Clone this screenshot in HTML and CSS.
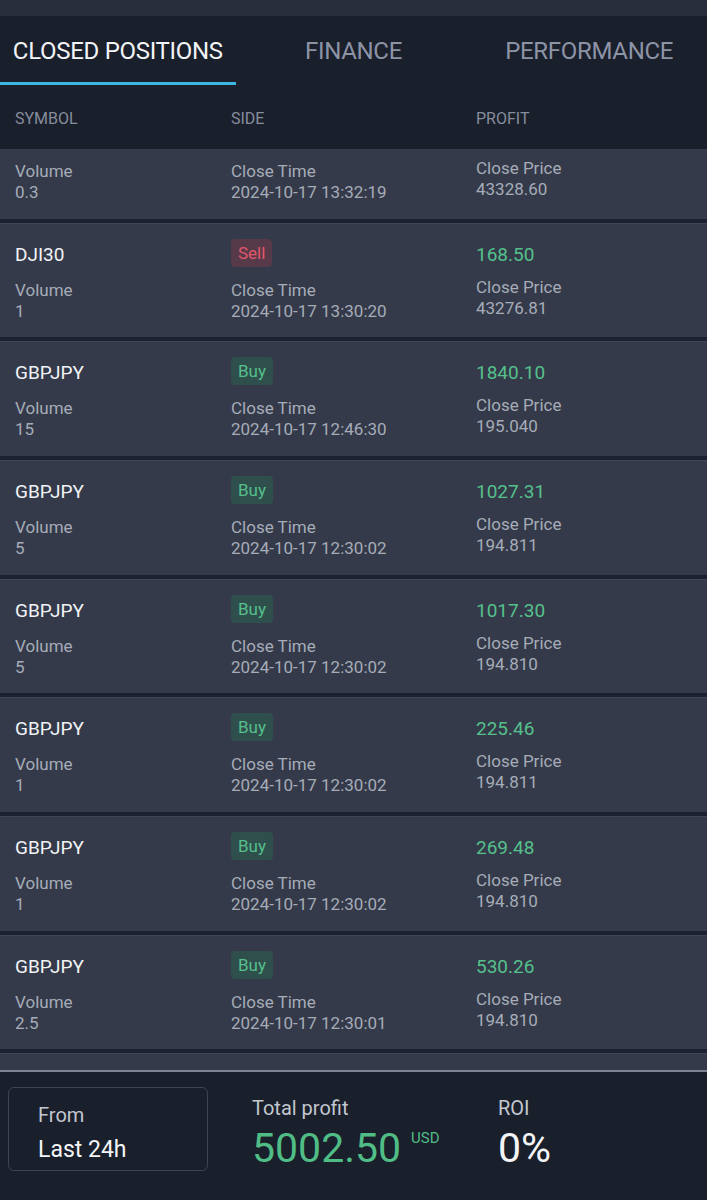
FILE: index.html
```html
<!DOCTYPE html>
<html lang="en">
<head>
    <meta charset="UTF-8">
    <meta name="viewport" content="width=device-width, initial-scale=1.0">
    <title>Closed positions</title>
    <link rel="stylesheet" href="styles.css">
</head>
<body>
    <div class="app">
        <div class="top-strip"></div>

        <div class="tabs">
            <div class="tab active">CLOSED POSITIONS</div>
            <div class="tab">FINANCE</div>
            <div class="tab">PERFORMANCE</div>
        </div>

        <div class="table-head">
            <span>SYMBOL</span>
            <span>SIDE</span>
            <span>PROFIT</span>
        </div>

        <div class="list">
            <div class="card partial">
                <div class="col">
                    <div class="label">Volume</div>
                    <div class="value">0.3</div>
                </div>
                <div class="col">
                    <div class="label">Close Time</div>
                    <div class="value">2024-10-17 13:32:19</div>
                </div>
                <div class="col price-col">
                    <div class="label">Close Price</div>
                    <div class="value">43328.60</div>
                </div>
            </div>

            <div class="card">
                <div class="col">
                    <div class="top-line symbol">DJI30</div>
                    <div class="label">Volume</div>
                    <div class="value">1</div>
                </div>
                <div class="col">
                    <div class="top-line"><span class="badge sell">Sell</span></div>
                    <div class="label">Close Time</div>
                    <div class="value">2024-10-17 13:30:20</div>
                </div>
                <div class="col price-col">
                    <div class="top-line profit">168.50</div>
                    <div class="label">Close Price</div>
                    <div class="value">43276.81</div>
                </div>
            </div>

            <div class="card">
                <div class="col">
                    <div class="top-line symbol">GBPJPY</div>
                    <div class="label">Volume</div>
                    <div class="value">15</div>
                </div>
                <div class="col">
                    <div class="top-line"><span class="badge buy">Buy</span></div>
                    <div class="label">Close Time</div>
                    <div class="value">2024-10-17 12:46:30</div>
                </div>
                <div class="col price-col">
                    <div class="top-line profit">1840.10</div>
                    <div class="label">Close Price</div>
                    <div class="value">195.040</div>
                </div>
            </div>

            <div class="card">
                <div class="col">
                    <div class="top-line symbol">GBPJPY</div>
                    <div class="label">Volume</div>
                    <div class="value">5</div>
                </div>
                <div class="col">
                    <div class="top-line"><span class="badge buy">Buy</span></div>
                    <div class="label">Close Time</div>
                    <div class="value">2024-10-17 12:30:02</div>
                </div>
                <div class="col price-col">
                    <div class="top-line profit">1027.31</div>
                    <div class="label">Close Price</div>
                    <div class="value">194.811</div>
                </div>
            </div>

            <div class="card">
                <div class="col">
                    <div class="top-line symbol">GBPJPY</div>
                    <div class="label">Volume</div>
                    <div class="value">5</div>
                </div>
                <div class="col">
                    <div class="top-line"><span class="badge buy">Buy</span></div>
                    <div class="label">Close Time</div>
                    <div class="value">2024-10-17 12:30:02</div>
                </div>
                <div class="col price-col">
                    <div class="top-line profit">1017.30</div>
                    <div class="label">Close Price</div>
                    <div class="value">194.810</div>
                </div>
            </div>

            <div class="card">
                <div class="col">
                    <div class="top-line symbol">GBPJPY</div>
                    <div class="label">Volume</div>
                    <div class="value">1</div>
                </div>
                <div class="col">
                    <div class="top-line"><span class="badge buy">Buy</span></div>
                    <div class="label">Close Time</div>
                    <div class="value">2024-10-17 12:30:02</div>
                </div>
                <div class="col price-col">
                    <div class="top-line profit">225.46</div>
                    <div class="label">Close Price</div>
                    <div class="value">194.811</div>
                </div>
            </div>

            <div class="card">
                <div class="col">
                    <div class="top-line symbol">GBPJPY</div>
                    <div class="label">Volume</div>
                    <div class="value">1</div>
                </div>
                <div class="col">
                    <div class="top-line"><span class="badge buy">Buy</span></div>
                    <div class="label">Close Time</div>
                    <div class="value">2024-10-17 12:30:02</div>
                </div>
                <div class="col price-col">
                    <div class="top-line profit">269.48</div>
                    <div class="label">Close Price</div>
                    <div class="value">194.810</div>
                </div>
            </div>

            <div class="card">
                <div class="col">
                    <div class="top-line symbol">GBPJPY</div>
                    <div class="label">Volume</div>
                    <div class="value">2.5</div>
                </div>
                <div class="col">
                    <div class="top-line"><span class="badge buy">Buy</span></div>
                    <div class="label">Close Time</div>
                    <div class="value">2024-10-17 12:30:01</div>
                </div>
                <div class="col price-col">
                    <div class="top-line profit">530.26</div>
                    <div class="label">Close Price</div>
                    <div class="value">194.810</div>
                </div>
            </div>

            <div class="card empty"></div>
        </div>

        <div class="footer">
            <div class="range-box">
                <div class="range-label">From</div>
                <div class="range-value">Last 24h</div>
            </div>
            <div class="stat profit-stat">
                <div class="stat-label">Total profit</div>
                <div class="stat-row">
                    <span class="stat-value green">5002.50</span>
                    <span class="currency">USD</span>
                </div>
            </div>
            <div class="stat">
                <div class="stat-label">ROI</div>
                <div class="stat-row">
                    <span class="stat-value">0%</span>
                </div>
            </div>
        </div>
    </div>
</body>
</html>
```

FILE: styles.css
```css
* {
    margin: 0;
    padding: 0;
    box-sizing: border-box;
}

body {
    font-family: Roboto, 'Liberation Sans', sans-serif;
    background: #1a1f2c;
    color: #a9afbb;
}

.app {
    width: 707px;
    height: 1200px;
    display: flex;
    flex-direction: column;
    overflow: hidden;
}

.top-strip {
    height: 16px;
    background: #292e3c;
}

/* tabs */
.tabs {
    display: grid;
    grid-template-columns: repeat(3, 1fr);
    height: 69px;
    background: #1a1f2c;
}

.tab {
    display: flex;
    justify-content: center;
    align-items: center;
    padding-top: 4px;
    font-size: 24px;
    letter-spacing: -0.3px;
    color: #8c93a5;
    border-bottom: 3px solid transparent;
}

.tab.active {
    color: #f2f4f7;
    border-bottom-color: #3db6e0;
}

.table-head {
    display: grid;
    grid-template-columns: 216px 245px 1fr;
    align-items: center;
    height: 64px;
    padding-left: 15px;
    padding-top: 2px;
    font-size: 16px;
    color: #868d9c;
    background: #1a1f2c;
}

/* position cards */
.list {
    height: 921px;
    overflow: hidden;
    background: #1c2130;
}

.card {
    display: grid;
    grid-template-columns: 216px 245px 1fr;
    padding: 15px 0 15.67px 15px;
    margin-bottom: 4px;
    background: #343a49;
    border-top: 1px solid #3f4657;
}

.card.partial {
    padding-top: 12px;
    border-top: none;
}

.card.partial .price-col {
    margin-top: -3px;
}

.card.empty {
    height: 119px;
}

.top-line {
    height: 28px;
    display: flex;
    align-items: center;
    padding-top: 3px;
    margin-bottom: 13px;
    font-size: 19px;
}

.price-col .top-line {
    margin-bottom: 10px;
}

.symbol {
    color: #f1f3f6;
}

.profit {
    color: #55c08c;
}

.label,
.value {
    font-size: 17px;
    line-height: 21px;
    color: #a6acb8;
}

.badge {
    display: inline-block;
    align-self: flex-start;
    height: 28px;
    line-height: 28px;
    margin-top: -3px;
    padding: 0 7px;
    border-radius: 4px;
    font-size: 17px;
}

.badge.sell {
    background: #563a49;
    color: #e0566a;
}

.badge.buy {
    background: #2f4f4c;
    color: #55c08c;
}

/* footer */
.footer {
    flex: 1;
    display: flex;
    align-items: flex-start;
    padding: 15px 0 0 8px;
    background: #1a1f2c;
    border-top: 2px solid #7d8393;
}

.range-box {
    width: 200px;
    height: 84px;
    margin-right: 44px;
    padding: 14px 0 0 29px;
    border: 1px solid #3e4455;
    border-radius: 6px;
}

.range-label {
    font-size: 20px;
    line-height: 26px;
    color: #c3c7cf;
}

.range-value {
    margin-top: 8px;
    font-size: 23px;
    line-height: 28px;
    color: #f4f5f7;
}

.profit-stat {
    width: 246px;
}

.stat-label {
    margin-top: 8px;
    font-size: 20px;
    line-height: 26px;
    color: #c3c7cf;
}

.stat-row {
    display: flex;
    align-items: flex-start;
    margin-top: 2px;
}

.stat-value {
    font-size: 41px;
    line-height: 50px;
    color: #f4f5f7;
}

.stat-value.green {
    color: #50bd86;
}

.currency {
    margin: 6px 0 0 10px;
    font-size: 15px;
    line-height: 18px;
    color: #50bd86;
}
```
